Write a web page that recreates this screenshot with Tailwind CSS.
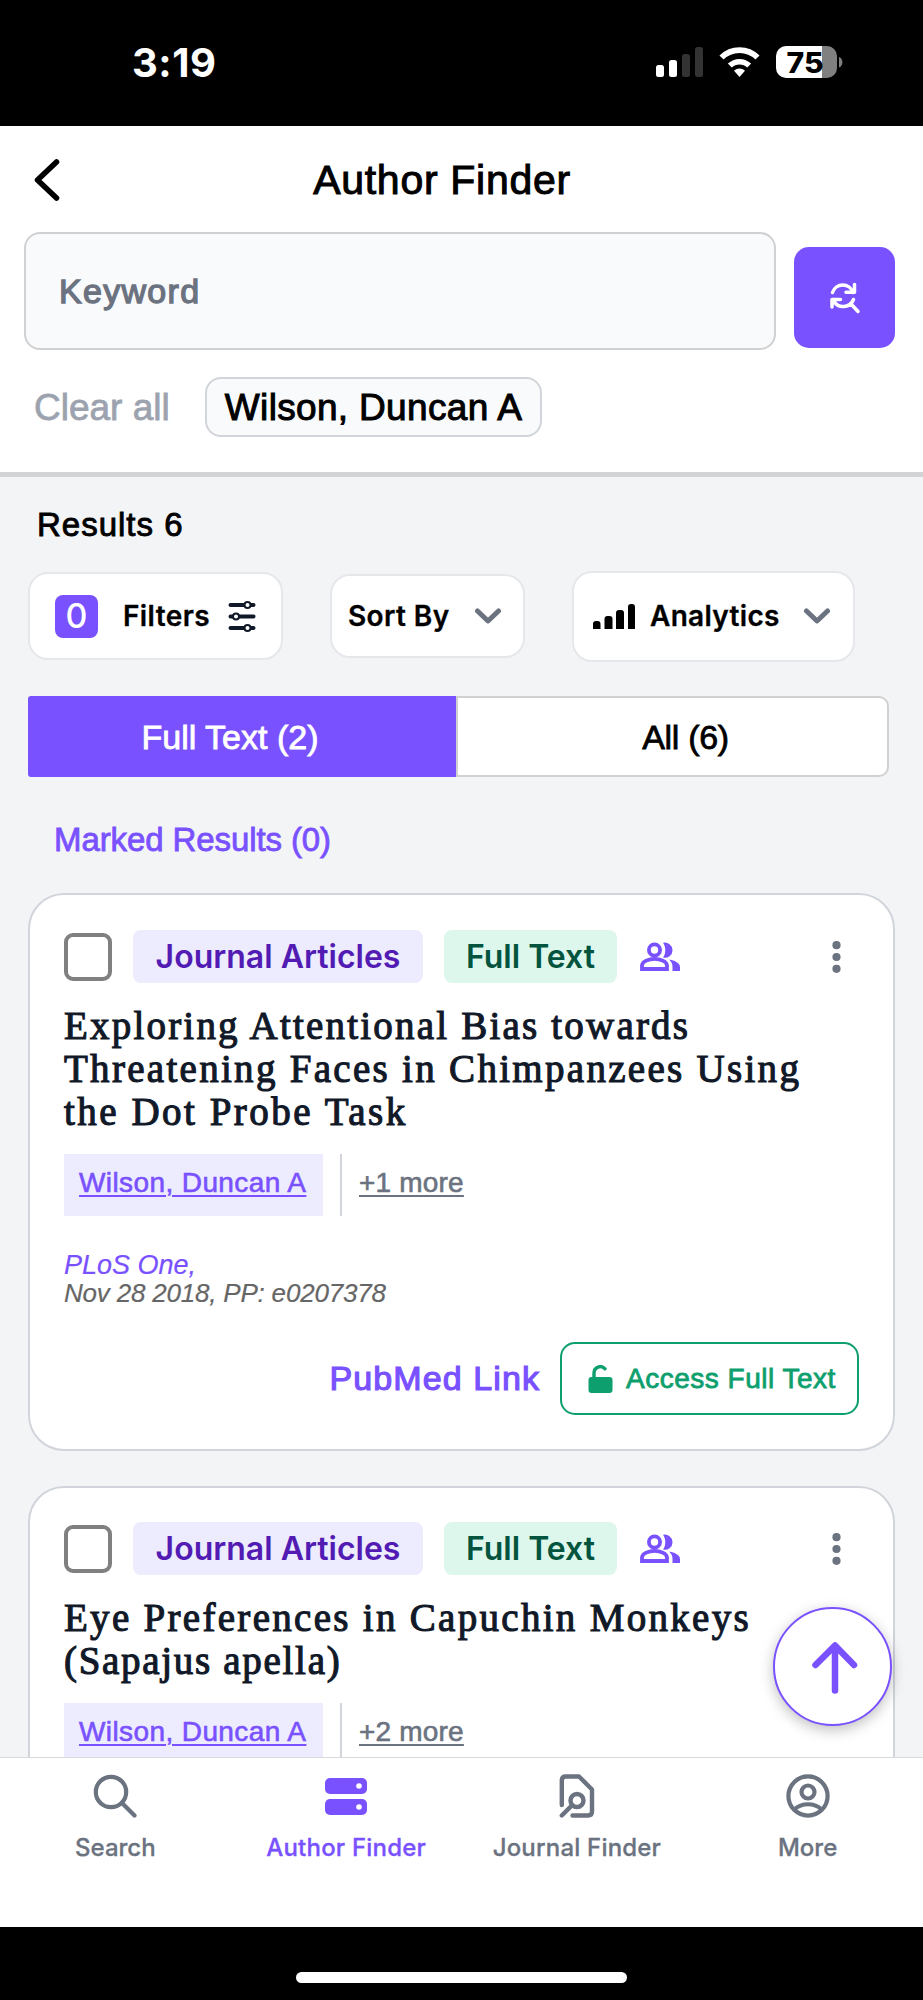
<!DOCTYPE html>
<html lang="en">
<head>
<meta charset="utf-8">
<title>Author Finder</title>
<script src="https://cdn.jsdelivr.net/npm/@tailwindcss/browser@4"></script>
</head>
<body class="w-[923px] h-[2000px] overflow-hidden bg-black font-['Liberation_Sans',Arial,sans-serif] text-black whitespace-nowrap">
<div class="relative flex flex-col w-[923px] h-[2000px]">

  <!-- Status bar -->
  <div class="h-[126px] shrink-0 bg-black flex items-center pl-[132px] pr-[80px] text-white">
    <span class="font-['Inter',sans-serif] font-bold text-[40px] leading-none tracking-[0.5px]">3:19</span>
    <svg class="ml-auto -mt-[2px]" width="188" height="34" viewBox="0 0 188 34" fill="#fff">
      <rect x="1" y="20" width="8" height="12" rx="2.5"/><rect x="14" y="15" width="8" height="17" rx="2.5"/>
      <rect x="27" y="9" width="8" height="23" rx="2.5" fill="#333"/><rect x="40" y="2" width="8" height="30" rx="2.5" fill="#333"/>
      <path d="M84.500 32l-5.500-6.200a8 8 0 0 1 11 0z"/>
      <path d="M74.800 20.600a14 14 0 0 1 19.400 0" fill="none" stroke="#fff" stroke-width="5.500"/>
      <path d="M66.500 12.500a25.500 25.500 0 0 1 36 0" fill="none" stroke="#fff" stroke-width="5.800"/>
      <path d="M131 1h36v32h-36a10 10 0 0 1-10-10V11a10 10 0 0 1 10-10z"/>
      <path d="M167 1h5a10 10 0 0 1 10 10v12a10 10 0 0 1-10 10h-5z" fill="#808080"/>
      <path d="M184 12c4.500 1.500 4.500 9 0 10.500z" fill="#808080"/>
      <text x="131.500" y="27.500" font-family="Inter" font-weight="800" font-size="28.500" fill="#000" textLength="37" lengthAdjust="spacingAndGlyphs">75</text>
    </svg>
  </div>

  <!-- Header -->
  <header class="bg-white shrink-0 h-[351px] border-b-[5px] border-[#d1d3d5]">
    <div class="h-[106px] pt-[2px] grid grid-cols-[80px_1fr_119px] items-center">
      <svg class="ml-[34px]" width="26" height="42" viewBox="0 0 26 42" fill="none" stroke="#000" stroke-width="5.500" stroke-linecap="round" stroke-linejoin="round"><path d="M22.500 3L3.500 21l19 18"/></svg>
      <h1 class="justify-self-center text-[41px] leading-none tracking-[0.7px] [-webkit-text-stroke:1px]">Author Finder</h1>
    </div>
    <div class="flex pl-6">
      <div class="w-[752px] h-[118px] rounded-2xl border-2 border-[#d1d1d1] bg-[#f9fafb] flex items-center pl-[33px] text-[#6b7280] text-[34px]"><span class="tracking-[1.3px] [-webkit-text-stroke:1.3px]">Keyword</span></div>
      <div class="ml-[18px] mt-[15px] w-[101px] h-[101px] rounded-[15px] bg-[#7951ff] flex items-center justify-center">
        <svg width="32" height="32" viewBox="0 0 32 32" fill="none" stroke="#fff" stroke-width="3.500" stroke-linecap="round" stroke-linejoin="round"><path d="M3.500 10.500a10.800 10.800 0 0 1 20.500 0M25.500 2.500v7.800h-8.500M24.500 17.500a11 11 0 0 1-19.500 2M3 25v-7.500h8.500M22.500 22.500l6.500 7"/></svg>
      </div>
    </div>
    <div class="flex items-center pl-[34px] mt-[27px] text-[37px] leading-none">
      <span class="text-[#9ca3af] [-webkit-text-stroke:0.8px]">Clear all</span>
      <div class="ml-auto mr-[381px] w-[337px] h-[60px] rounded-2xl border-2 border-[#d1d5db] bg-[#f9fafb] flex items-center justify-center"><span class="tracking-[0.33px] [-webkit-text-stroke:1px]">Wilson, Duncan A</span></div>
    </div>
  </header>

  <!-- Results -->
  <main class="relative flex-1 min-h-0 overflow-hidden bg-[#f3f4f6] px-7">
    <div class="pt-[30px] pl-[9px] h-[93px] text-[33px] leading-[36px]"><span class="tracking-[1px] [-webkit-text-stroke:0.9px]">Results 6</span></div>
    <div class="flex items-center h-[92px] font-['Inter',sans-serif] font-semibold text-[28px] leading-none">
      <button class="w-[255px] h-[88px] rounded-[20px] border-2 border-[#e5e7eb] bg-white flex items-center pl-[25px]">
        <span class="w-[43px] h-[43px] rounded-[8px] bg-[#7951ff] text-white flex items-center justify-center text-[34px] font-medium">0</span>
        <span class="ml-[25px] tracking-[0.4px] [-webkit-text-stroke:0.3px]">Filters</span>
        <svg class="ml-[18px]" width="28" height="32" viewBox="0 0 28 32" fill="#fff" stroke="#111928" stroke-width="4" stroke-linecap="round"><path d="M2.500 5h23M2.500 16.500h23M2.500 28h23"/><g stroke-width="2"><circle cx="19.500" cy="5" r="3"/><circle cx="8" cy="16.500" r="3"/><circle cx="19.500" cy="28" r="3"/></g></svg>
      </button>
      <button class="ml-[47px] w-[195px] h-[84px] rounded-[20px] border-2 border-[#e5e7eb] bg-white flex items-center pl-[16px]">
        <span class="tracking-[0.4px] [-webkit-text-stroke:0.3px]">Sort By</span>
        <svg class="ml-[24px]" width="28" height="18" viewBox="0 0 28 18" fill="none" stroke="#6b7280" stroke-width="5" stroke-linecap="round" stroke-linejoin="round"><path d="M3.500 4L14 14 24.500 4"/></svg>
      </button>
      <button class="ml-[47px] w-[283px] h-[91px] rounded-[20px] border-2 border-[#e5e7eb] bg-white flex items-center pl-[19px]">
        <svg width="42" height="25" viewBox="0 0 42 25"><path d="M0 25v-5q0-3 3-3h1.500q3 0 3 3v5zM11.500 25V15q0-3 3-3h2q3 0 3 3v10zM23 25V9q0-3 3-3h2q3 0 3 3v16zM35 25V3q0-3 3-3h1q3 0 3 3v22z"/></svg>
        <span class="ml-[15px] tracking-[0.3px] [-webkit-text-stroke:0.3px]">Analytics</span>
        <svg class="ml-[23px]" width="28" height="18" viewBox="0 0 28 18" fill="none" stroke="#6b7280" stroke-width="5" stroke-linecap="round" stroke-linejoin="round"><path d="M3.500 4L14 14 24.500 4"/></svg>
      </button>
    </div>
    <div class="flex mt-[34px] h-[81px] w-[861px] text-[34px] leading-none">
      <div class="w-[428px] rounded-l-[3px] bg-[#7951ff] text-white flex items-center justify-center pr-6"><span class="[-webkit-text-stroke:0.8px]">Full Text (2)</span></div>
      <div class="flex-1 rounded-r-[10px] border-2 border-[#d1d1d1] bg-white flex items-center justify-center pl-[26px]"><span class="tracking-[-0.3px] [-webkit-text-stroke:0.8px]">All (6)</span></div>
    </div>
    <div class="mt-[44px] h-[72px] pl-[26px] text-[33px] leading-[38px] text-[#7951ff]"><span class="tracking-[-0.1px] [-webkit-text-stroke:0.8px]">Marked Results (0)</span></div>

    <!-- Result card -->
    <article class="w-[867px] h-[558px] rounded-[36px] border-2 border-[#d1d5db] bg-white px-[34px] pt-[35px]">
      <div class="flex items-center h-[53px] font-['Inter',sans-serif] font-semibold text-[32px] leading-none">
        <span class="w-12 h-12 rounded-[9px] border-[4.500px] border-[#808080] bg-white"></span>
        <span class="ml-[21px] w-[290px] h-[53px] rounded-lg bg-[#edebfe] text-[#521bb3] flex items-center justify-center">Journal Articles</span>
        <span class="ml-[21px] w-[173px] h-[53px] rounded-lg bg-[#def7ec] text-[#03543f] flex items-center justify-center">Full Text</span>
        <svg class="ml-[22px]" width="42" height="32" viewBox="0 0 42 32" fill="none" stroke="#7951ff" stroke-width="3.800"><circle cx="15.500" cy="9" r="5.600"/><path d="M3 28v-3.500c0-4 7.200-6.700 12.500-6.700S28 20.500 28 24.500V28z"/><g fill="#7951ff" stroke="none"><path d="M24 1.800a7.600 7.600 0 1 1 0 14.700c3-4 3-10.700 0-14.700zM30 18.500c6 1 11 3.500 11 7.500v4h-7.500v-4c0-3.500-1.500-5.700-3.500-7.500z"/></g></svg>
        <svg class="ml-auto mr-[18px]" width="9" height="32" viewBox="0 0 9 32" fill="#6b7280"><circle cx="4.500" cy="4.200" r="4.100"/><circle cx="4.500" cy="16" r="4.100"/><circle cx="4.500" cy="27.800" r="4.100"/></svg>
      </div>
      <h2 class="mt-[21px] font-['Liberation_Serif',serif] text-[39px] leading-[43px] text-[#111928] [-webkit-text-stroke:1.1px]"><span class="tracking-[2.2px]">Exploring Attentional Bias towards</span><br><span class="tracking-[2.3px]">Threatening Faces in Chimpanzees Using</span><br><span class="tracking-[2.5px]">the Dot Probe Task</span></h2>
      <div class="flex mt-[21px] h-[62px] text-[28px] leading-[58px]">
        <div class="w-[259px] bg-[#edebfe] text-[#7951ff] pl-[15px]"><span class="tracking-[0.4px] underline underline-offset-[3px] decoration-2 [-webkit-text-stroke:0.6px]">Wilson, Duncan A</span></div>
        <div class="ml-[17px] w-[2px] bg-[#d1d5db]"></div>
        <div class="ml-[17px] text-[#6b7280]"><span class="tracking-[0.2px] underline underline-offset-[3px] decoration-2 [-webkit-text-stroke:0.6px]">+1 more</span></div>
      </div>
      <div class="mt-[35px] italic text-[27px] leading-[28px]"><div class="text-[#7951ff] [-webkit-text-stroke:0.2px]">PLoS One,</div><div class="text-[26px] tracking-[-0.2px] text-[#666] [-webkit-text-stroke:0.2px]">Nov 28 2018, PP: e0207378</div></div>
      <div class="flex items-center justify-end mt-[35px] h-[73px] leading-none">
        <span class="text-[34px] pb-[2px] text-[#7951ff] tracking-[1.1px] [-webkit-text-stroke:1.2px]">PubMed Link</span>
        <button class="ml-[20px] w-[299px] h-[73px] rounded-[15px] border-[2.500px] border-[#0e9f6e] text-[#0e9f6e] text-[28px] flex items-center pl-[26px]">
          <svg width="25" height="28" viewBox="0 0 25 28"><rect x="0.500" y="12" width="24" height="16" rx="3" fill="#0e9f6e"/><path d="M6 14V8a6.300 6.300 0 0 1 11-4.200" fill="none" stroke="#0e9f6e" stroke-width="3.400" stroke-linecap="round"/></svg>
          <span class="ml-[13px] tracking-[0.5px] [-webkit-text-stroke:0.8px]">Access Full Text</span>
        </button>
      </div>
    </article>

    <article class="mt-[35px] w-[867px] h-[500px] rounded-[36px] border-2 border-[#d1d5db] bg-white px-[34px] pt-[34px]">
      <div class="flex items-center h-[53px] font-['Inter',sans-serif] font-semibold text-[32px] leading-none">
        <span class="w-12 h-12 rounded-[9px] border-[4.500px] border-[#808080] bg-white"></span>
        <span class="ml-[21px] w-[290px] h-[53px] rounded-lg bg-[#edebfe] text-[#521bb3] flex items-center justify-center">Journal Articles</span>
        <span class="ml-[21px] w-[173px] h-[53px] rounded-lg bg-[#def7ec] text-[#03543f] flex items-center justify-center">Full Text</span>
        <svg class="ml-[22px]" width="42" height="32" viewBox="0 0 42 32" fill="none" stroke="#7951ff" stroke-width="3.800"><circle cx="15.500" cy="9" r="5.600"/><path d="M3 28v-3.500c0-4 7.200-6.700 12.500-6.700S28 20.500 28 24.500V28z"/><g fill="#7951ff" stroke="none"><path d="M24 1.800a7.600 7.600 0 1 1 0 14.700c3-4 3-10.700 0-14.700zM30 18.500c6 1 11 3.500 11 7.500v4h-7.500v-4c0-3.500-1.500-5.700-3.500-7.500z"/></g></svg>
        <svg class="ml-auto mr-[18px]" width="9" height="32" viewBox="0 0 9 32" fill="#6b7280"><circle cx="4.500" cy="4.200" r="4.100"/><circle cx="4.500" cy="16" r="4.100"/><circle cx="4.500" cy="27.800" r="4.100"/></svg>
      </div>
      <h2 class="mt-[21px] font-['Liberation_Serif',serif] text-[39px] leading-[43px] text-[#111928] [-webkit-text-stroke:1.1px]"><span class="tracking-[2.3px]">Eye Preferences in Capuchin Monkeys</span><br><span class="tracking-[1.7px]">(Sapajus apella)</span></h2>
      <div class="flex mt-[21px] h-[62px] text-[28px] leading-[58px]">
        <div class="w-[259px] bg-[#edebfe] text-[#7951ff] pl-[15px]"><span class="tracking-[0.4px] underline underline-offset-[3px] decoration-2 [-webkit-text-stroke:0.6px]">Wilson, Duncan A</span></div>
        <div class="ml-[17px] w-[2px] bg-[#d1d5db]"></div>
        <div class="ml-[17px] text-[#6b7280]"><span class="tracking-[0.2px] underline underline-offset-[3px] decoration-2 [-webkit-text-stroke:0.6px]">+2 more</span></div>
      </div>
    </article>

    <!-- Back to top -->
    <button class="absolute right-[31px] bottom-[31px] w-[119px] h-[119px] rounded-full border-2 border-[#7951ff] bg-white shadow-[0_4px_14px_rgba(0,0,0,0.25)] flex items-center justify-center pt-[2px] pl-[2px]">
      <svg width="48" height="54" viewBox="0 0 48 54" fill="none" stroke="#7951ff" stroke-width="6.500" stroke-linecap="round" stroke-linejoin="round"><path d="M25 49.500V5M5.500 24L25 4.500 44 24"/></svg>
    </button>
  </main>

  <!-- Tab bar -->
  <nav class="shrink-0 h-[170px] bg-white border-t border-[#d9dadd] grid grid-cols-4 pt-4 text-[#6b7280] font-['Inter',sans-serif] font-medium text-[24px] leading-none">
    <div class="flex flex-col items-center"><svg width="44" height="44" viewBox="0 0 44 44" fill="none" stroke="currentColor" stroke-width="4.200" stroke-linecap="round"><circle cx="18" cy="18" r="15.200"/><path d="M29 29l12.500 12.500"/></svg><span class="mt-[18px] [-webkit-text-stroke:0.3px]">Search</span></div>
    <div class="flex flex-col items-center text-[#7951ff]"><svg width="44" height="44" viewBox="0 0 44 44" fill="currentColor"><rect x="1" y="4" width="42" height="16" rx="5"/><rect x="1" y="25" width="42" height="16" rx="5"/><circle cx="35" cy="12" r="2.800" fill="#fff"/><circle cx="35" cy="33" r="2.800" fill="#fff"/></svg><span class="mt-[18px] tracking-[0.2px] [-webkit-text-stroke:0.3px]">Author Finder</span></div>
    <div class="flex flex-col items-center"><svg width="44" height="44" viewBox="0 0 44 44" fill="none" stroke="currentColor" stroke-width="4.400" stroke-linecap="round" stroke-linejoin="round"><path d="M6.800 31V6.500q0-4 4-4H24L37 15.500V37.500q0 4-4 4H17.500M6.800 41.500l9.500-9.500"/><circle cx="22" cy="26.500" r="6.500"/></svg><span class="mt-[18px] tracking-[0.2px] [-webkit-text-stroke:0.3px]">Journal Finder</span></div>
    <div class="flex flex-col items-center"><svg width="44" height="44" viewBox="0 0 44 44" fill="none" stroke="currentColor" stroke-width="4.200"><circle cx="22" cy="22" r="19.600"/><circle cx="22" cy="18" r="6.500"/><path d="M8.500 35.500c7-7 20-7 27 0"/></svg><span class="mt-[18px] [-webkit-text-stroke:0.3px]">More</span></div>
  </nav>
  <div class="shrink-0 h-[73px] bg-black pt-[45px]"><div class="mx-auto w-[331px] h-[11px] rounded-full bg-white"></div></div>
</div>
</body>
</html>
